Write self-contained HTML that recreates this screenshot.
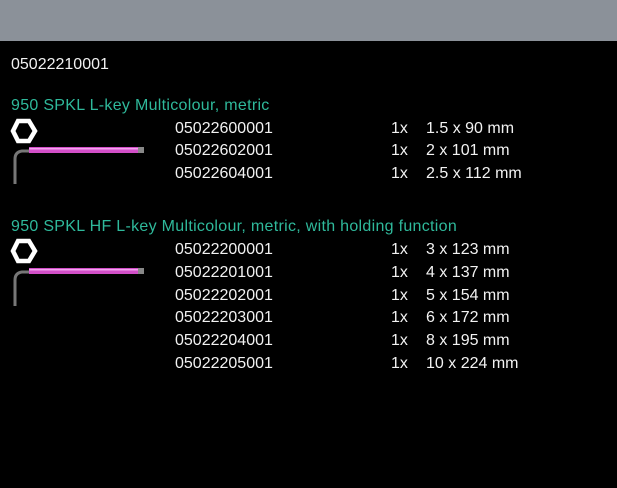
<!DOCTYPE html>
<html><head><style>
body{margin:0;width:617px;height:488px;background:#000;overflow:hidden;font-family:"Liberation Sans",sans-serif;font-size:16px;color:#f2f2f2;position:relative}
.bar{position:absolute;left:0;top:0;width:617px;height:41px;background:#8b9199}
.t{position:absolute;white-space:nowrap;line-height:18px}
.g{color:#2fb99b;letter-spacing:0.3px}
</style></head><body>
<div class="bar"></div>
<div class="t" style="left:11px;top:56px">05022210001</div>
<div class="t g" style="left:11px;top:97px">950 SPKL L-key Multicolour, metric</div>
<div class="t g" style="left:11px;top:218px">950 SPKL HF L-key Multicolour, metric, with holding function</div>
<svg style="position:absolute;left:10px;top:118px" width="140" height="70">
<polygon points="8,3 19,3 25,13 19,23 8,23 3,13" fill="none" stroke="#fff" stroke-width="4.5"/>
<path d="M5,66 L5,41 Q5,34 12,33 L20,33" fill="none" stroke="#777" stroke-width="3"/>
<rect x="19" y="29" width="115" height="6" fill="#d24fc8"/>
<rect x="19" y="30" width="115" height="1.5" fill="#f3a2ef"/>
<rect x="128" y="29" width="6" height="6" fill="#888"/>
</svg>
<svg style="position:absolute;left:10px;top:238px" width="140" height="70">
<polygon points="8,3 19,3 25,13 19,23 8,23 3,13" fill="none" stroke="#fff" stroke-width="4.5"/>
<path d="M5,68 L5,42 Q5,35 12,34 L20,34" fill="none" stroke="#777" stroke-width="3"/>
<rect x="19" y="30" width="115" height="6" fill="#d24fc8"/>
<rect x="19" y="31" width="115" height="1.5" fill="#f3a2ef"/>
<rect x="128" y="30" width="6" height="6" fill="#888"/>
</svg>
<div class="t" style="left:175px;top:120px">05022600001</div><div class="t" style="left:391px;top:120px">1x</div><div class="t" style="left:426px;top:120px">1.5 x 90 mm</div>
<div class="t" style="left:175px;top:142px">05022602001</div><div class="t" style="left:391px;top:142px">1x</div><div class="t" style="left:426px;top:142px">2 x 101 mm</div>
<div class="t" style="left:175px;top:165px">05022604001</div><div class="t" style="left:391px;top:165px">1x</div><div class="t" style="left:426px;top:165px">2.5 x 112 mm</div>
<div class="t" style="left:175px;top:241px">05022200001</div><div class="t" style="left:391px;top:241px">1x</div><div class="t" style="left:426px;top:241px">3 x 123 mm</div>
<div class="t" style="left:175px;top:264px">05022201001</div><div class="t" style="left:391px;top:264px">1x</div><div class="t" style="left:426px;top:264px">4 x 137 mm</div>
<div class="t" style="left:175px;top:287px">05022202001</div><div class="t" style="left:391px;top:287px">1x</div><div class="t" style="left:426px;top:287px">5 x 154 mm</div>
<div class="t" style="left:175px;top:309px">05022203001</div><div class="t" style="left:391px;top:309px">1x</div><div class="t" style="left:426px;top:309px">6 x 172 mm</div>
<div class="t" style="left:175px;top:332px">05022204001</div><div class="t" style="left:391px;top:332px">1x</div><div class="t" style="left:426px;top:332px">8 x 195 mm</div>
<div class="t" style="left:175px;top:355px">05022205001</div><div class="t" style="left:391px;top:355px">1x</div><div class="t" style="left:426px;top:355px">10 x 224 mm</div>
</body></html>
